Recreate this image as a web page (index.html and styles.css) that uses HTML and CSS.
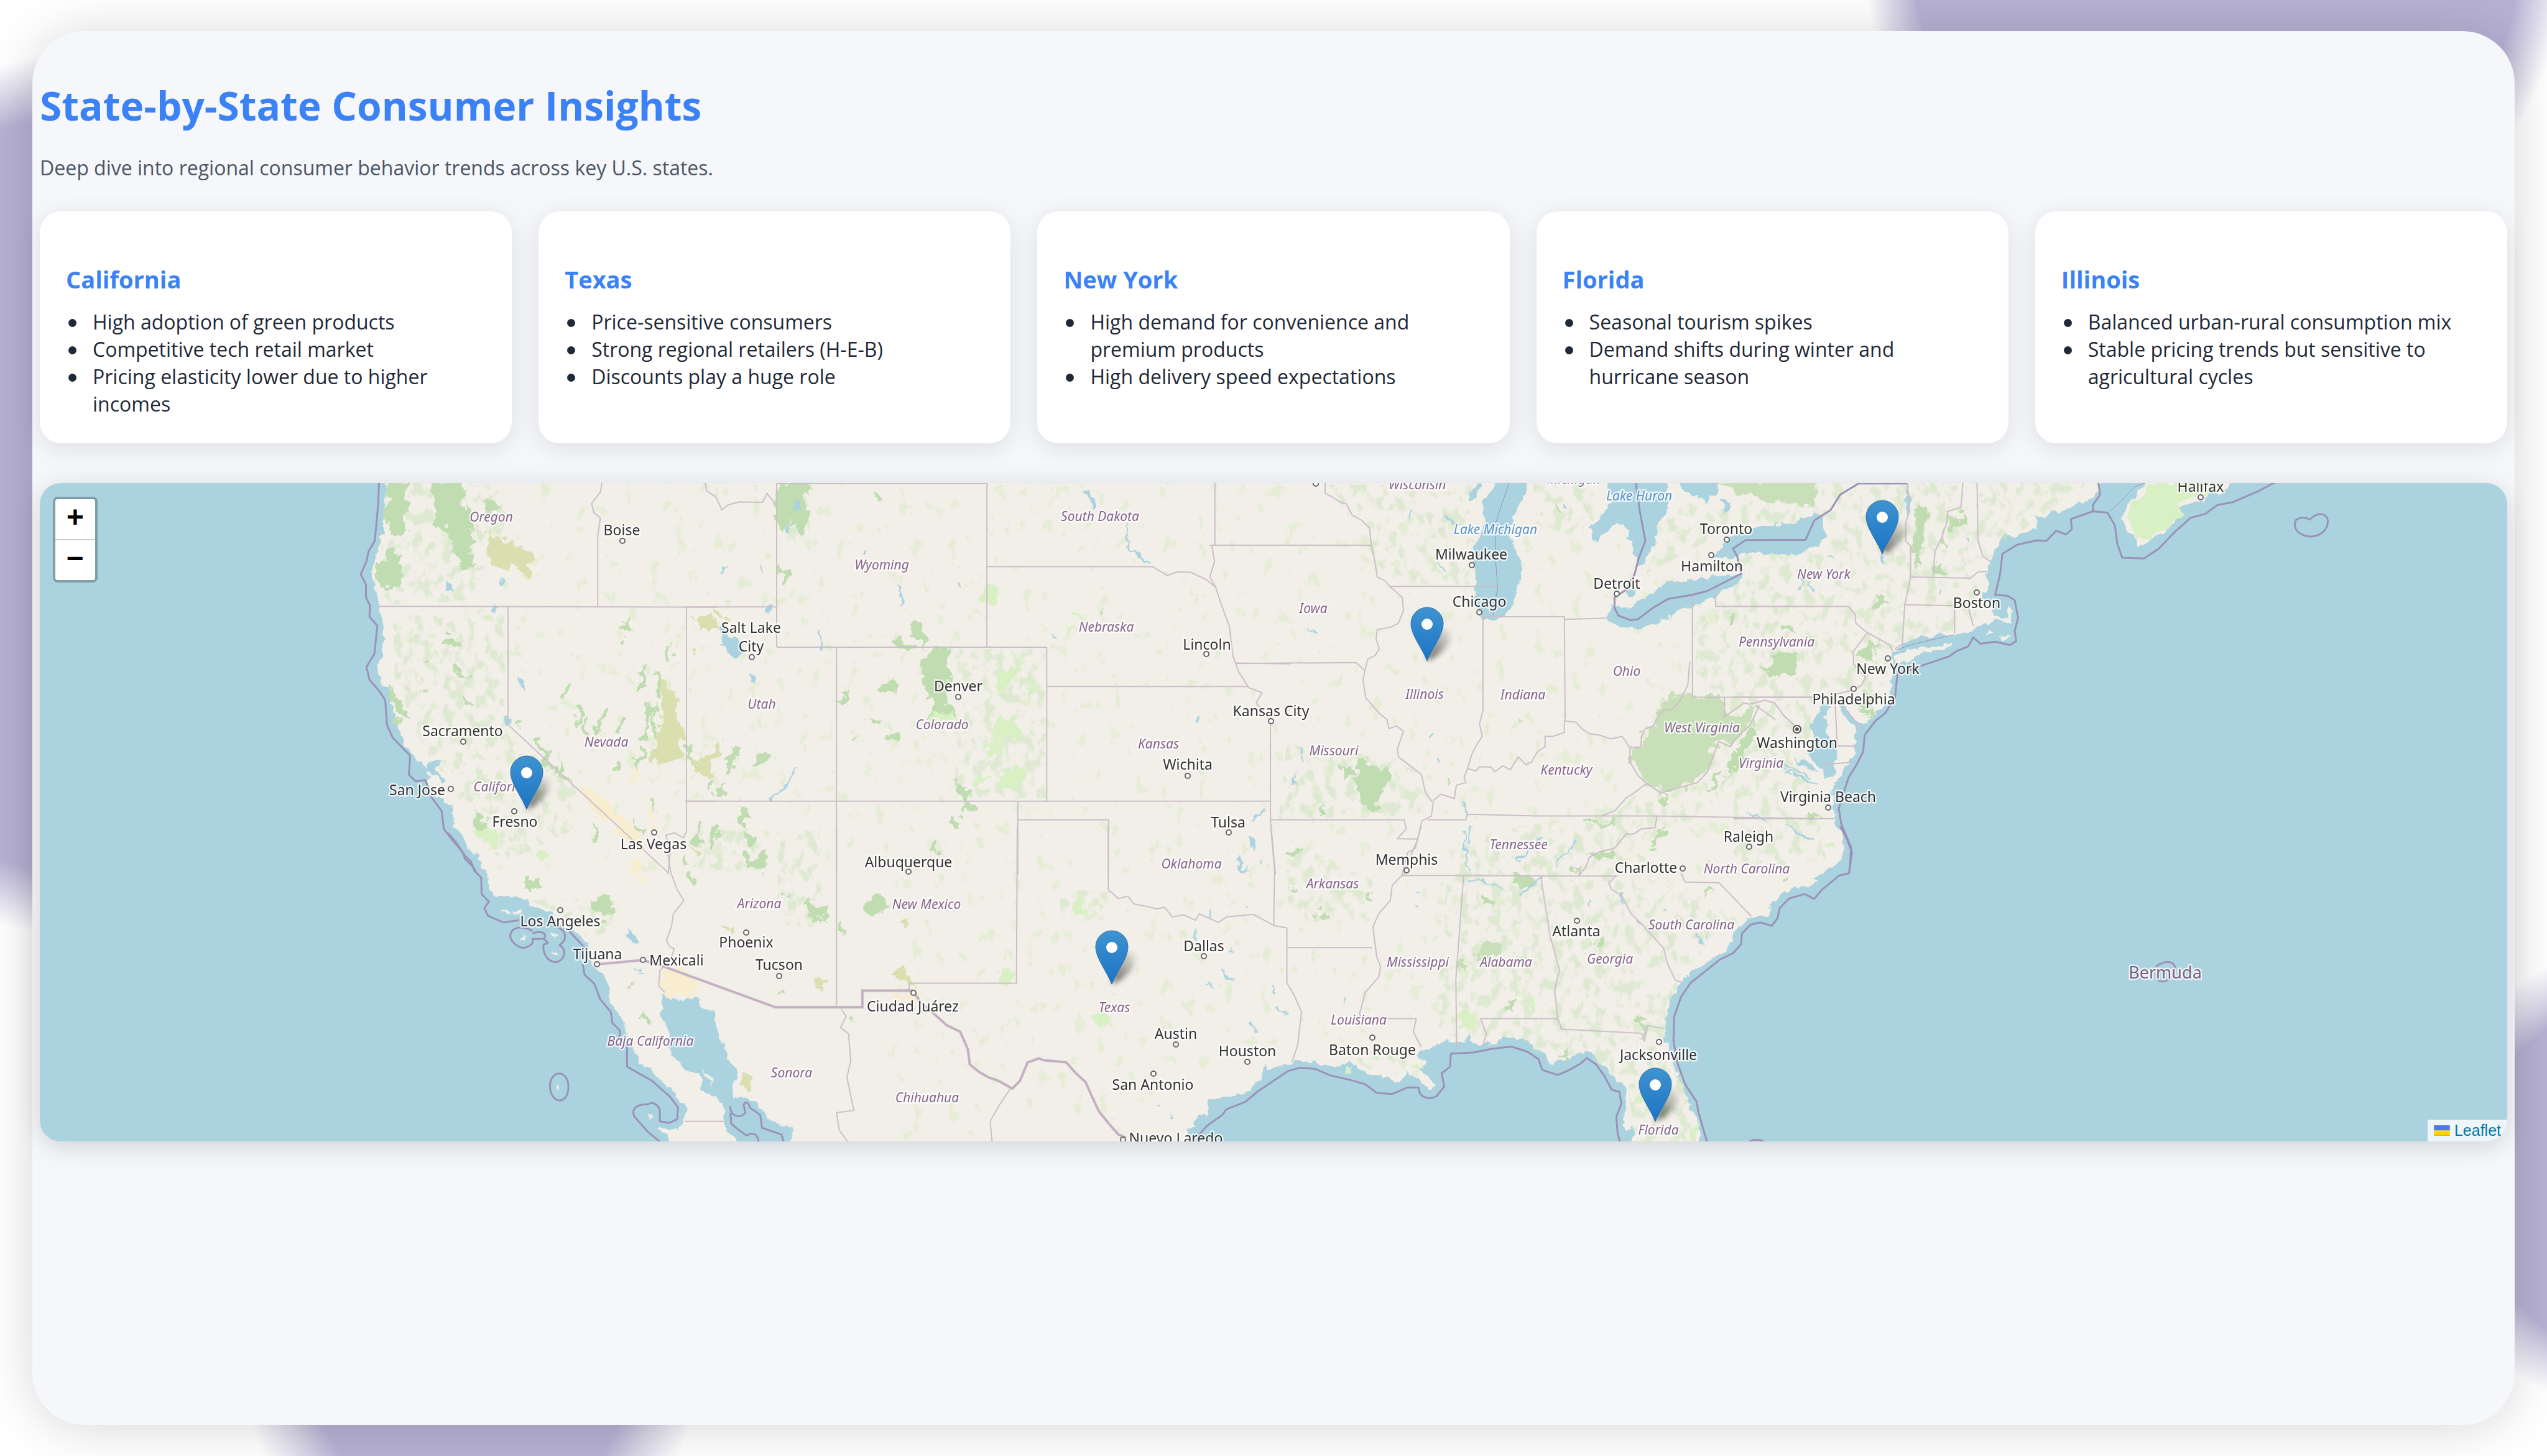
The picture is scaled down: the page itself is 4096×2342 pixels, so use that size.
FILE: index.html
```html
<!DOCTYPE html>
<html lang="en">
<head>
<meta charset="utf-8">
<meta name="viewport" content="width=device-width, initial-scale=1">
<title>State-by-State Consumer Insights</title>
<link rel="stylesheet" href="styles.css">
</head>
<body>
<main class="panel">
  <h1 class="title">State-by-State Consumer Insights</h1>
  <p class="subtitle">Deep dive into regional consumer behavior trends across key U.S. states.</p>

  <section class="cards">
    <article class="card">
      <h3>California</h3>
      <ul>
        <li>High adoption of green products</li>
        <li>Competitive tech retail market</li>
        <li>Pricing elasticity lower due to higher incomes</li>
      </ul>
    </article>
    <article class="card">
      <h3>Texas</h3>
      <ul>
        <li>Price-sensitive consumers</li>
        <li>Strong regional retailers (H-E-B)</li>
        <li>Discounts play a huge role</li>
      </ul>
    </article>
    <article class="card">
      <h3>New York</h3>
      <ul>
        <li>High demand for convenience and premium products</li>
        <li>High delivery speed expectations</li>
      </ul>
    </article>
    <article class="card">
      <h3>Florida</h3>
      <ul>
        <li>Seasonal tourism spikes</li>
        <li>Demand shifts during winter and hurricane season</li>
      </ul>
    </article>
    <article class="card">
      <h3>Illinois</h3>
      <ul>
        <li>Balanced urban-rural consumption mix</li>
        <li>Stable pricing trends but sensitive to agricultural cycles</li>
      </ul>
    </article>
  </section>

  <section class="map">
    <svg class="map-canvas" viewBox="0 0 3968 1059" preserveAspectRatio="xMidYMid slice" role="img" aria-label="Map of the United States">
      <defs>
        <filter id="ragged" filterUnits="userSpaceOnUse" x="0" y="0" width="3970" height="1059" color-interpolation-filters="sRGB">
          <feTurbulence type="fractalNoise" baseFrequency="0.06" numOctaves="3" seed="4" result="n"/>
          <feDisplacementMap in="SourceGraphic" in2="n" scale="16" xChannelSelector="R" yChannelSelector="G"/>
        </filter>
        <filter id="rough" filterUnits="userSpaceOnUse" x="0" y="0" width="3970" height="1059" color-interpolation-filters="sRGB">
          <feTurbulence type="fractalNoise" baseFrequency="0.05" numOctaves="4" seed="9" result="n"/>
          <feDisplacementMap in="SourceGraphic" in2="n" scale="34" xChannelSelector="R" yChannelSelector="G"/>
        </filter>
        <filter id="speckle" filterUnits="userSpaceOnUse" x="0" y="0" width="3970" height="1059" color-interpolation-filters="sRGB">
          <feTurbulence type="fractalNoise" baseFrequency="0.06 0.045" numOctaves="4" seed="21"/>
          <feColorMatrix values="0 0 0 0 0  0 0 0 0 0  0 0 0 0 0  7 0 0 0 -3.6" result="m"/>
          <feComposite in="SourceGraphic" in2="m" operator="in"/>
        </filter>
        <filter id="speckle-sparse" filterUnits="userSpaceOnUse" x="0" y="0" width="3970" height="1059" color-interpolation-filters="sRGB">
          <feTurbulence type="fractalNoise" baseFrequency="0.05 0.035" numOctaves="4" seed="5"/>
          <feColorMatrix values="0 0 0 0 0  0 0 0 0 0  0 0 0 0 0  0 10 0 0 -6.5" result="m"/>
          <feComposite in="SourceGraphic" in2="m" operator="in"/>
        </filter>
        <filter id="soft" x="-50%" y="-50%" width="200%" height="200%"><feGaussianBlur stdDeviation="4"/></filter>
        <linearGradient id="pin-fill" x1="0" y1="0" x2="0" y2="1"><stop offset="0" stop-color="#3f93d0"/><stop offset="1" stop-color="#1c74c4"/></linearGradient>
        <linearGradient id="pin-shade" x1="0" y1="1" x2="1" y2="0"><stop offset="0" stop-color="#000" stop-opacity=".6"/><stop offset="1" stop-color="#000" stop-opacity="0"/></linearGradient>
        <g id="pin">
          <path d="M0 0C4-16 10-40 22-50C34-56 42-46 38-36C34-22 18-6 0 0Z" fill="url(#pin-shade)" filter="url(#soft)"/>
          <path d="M0 0C-9-22-26-42-26-60A26 26 0 0 1 26-60C26-42 9-22 0 0Z" fill="url(#pin-fill)" stroke="#2b6fa8" stroke-width="1"/>
          <circle cy="-59" r="9" fill="#fff"/>
        </g>
        <circle id="dot" r="4" fill="#fff" stroke="#666" stroke-width="2"/>
      </defs>

      <g class="land" filter="url(#ragged)">
        <g class="t4"><path d="M808 20L803 180L800 250L785 340L778 400L782 460L792 530L805 590L802 660L800 720L788 780L800 815L820 860L828 920L832 985L845 1030L860 1075L880 1120L892 1135L918 1155L905 1170L915 1190L905 1215L925 1270L945 1290L962 1300L960 1350L970 1385L985 1420L1000 1455L1018 1490L1030 1520L1045 1568L1700 1568L1700 20Z"/></g>
        <g class="t8"><path d="M335-10L360 40L375 90L410 160L415 195L430 205L432 290L445 320L500 320L530 335L540 360L570 385L600 395L600 430L640 470L670 500L690 530L690 580L705 640L720 680L745 740L745 800L765 860L790 910L790 960L808 1020L815 1080L860 1120L890 1170L920 1230L945 1290L940 1350L915 1385L870 1385L910 1460L1084 1460L1055 1400L1042 1350L1040 1280L1020 1250L985 1190L975 1140L920 1080L900 1020L890 900L878 860L882 780L890 765L935 800L960 785L975 800L980 830L1018 845L1020 920L1040 990L1050 1060L1075 1120L1082 1150L1062 1180L1065 1235L1090 1230L1105 1260L1130 1260L1160 1350L1215 1375L1220 1470L1700 1470L1700-10Z"/>
          <path d="M465 390h18v14h-18zM488 384h24v12h-24zM598 480l14 20-12 10zM515 508h10v14h-10zM598 560l12 26-8 4zM612 1175l8 30-6 6zM850 1310l7 30-10 6zM985 1115l14 25 16 48-18-22z"/></g>
        <g class="t5"><path d="M-200 20H1700V1600H-200Z"/></g>
        <g class="t9"><path d="M-100-10V1470H800L775 1390L800 1370L800 1330L830 1310L835 1250L870 1240L920 1230L950 1190L970 1150L980 1080L990 1110L1050 1080L1100 1078L1150 1100L1180 1100L1200 1075L1230 1120L1270 1140L1300 1150L1335 1175L1345 1130L1370 1130L1385 1165L1400 1210L1418 1175L1400 1150L1380 1110L1400 1080L1370 1050L1400 1010L1440 985L1500 985L1510 930L1515 990L1568 990L1620 960V-10Z"/></g>
        <g class="t10"><path d="M-60-10V960L20 1005L60 985L140 985L148 930L160 985L190 1000L205 985L230 968L290 970L310 1000L345 1030L365 1090L400 1075L420 1060L435 1035L470 1040L490 1085L520 1130L530 1165L552 1180L560 1230L555 1290L550 1360L560 1400L575 1370L580 1410L565 1470L752 1470L745 1380L735 1310L715 1260L705 1200L690 1130L670 1040L658 960L660 890L670 800L690 750L710 700L735 650L775 615L805 575L835 535L840 480L870 425L890 410L925 405L935 350L960 310L990 285L1040 265L1055 240L1010 230L1030 190L1000 150L1060 160L1080 130L1030 110L1005 80L1060 90L1100 110L1085 60L1060 20L1040-10Z"/></g>
        <g class="t6"><path d="M-100 20H1500V1600H-100Z"/></g>
        <g class="t7"><path d="M-60 20L752 20L745 95L715 120L690 140L660 165L650 150L635 185L620 170L620 220L600 230L580 250L550 245L545 290L530 310L525 350L515 400L525 440L510 470L510 500L530 510L530 560L562 572L560 520L575 540L568 580L530 578L525 600L495 600L480 625L450 630L400 640L365 655L340 680L326 700L322 750L328 790L318 850L320 890L290 940L265 990L240 950L225 905L215 920L250 1010L250 1080L240 1130L225 1160L212 1210L200 1240L204 1300L208 1370L225 1420L225 1480L210 1530L160 1580H-60Z"/>
          <path d="M330 712L370 690L430 668L450 670L430 690L380 715L345 740L328 735ZM515 630l12-20 10 14zM545 640l16-4 4 8-16 4z"/>
          <path d="M855 20L815 110L798 165L800 215L820 250L832 295L850 265L880 240L905 190L920 130L950 110L960 125L965 100L1000 75L1035 20Z"/></g>
      </g>

      <g class="wash" filter="url(#speckle)">
        <g class="t4"><path d="M812 30L1070 30L1090 180L1000 500L805 520L800 300ZM825 560L1080 560L1085 980L1250 1250L1230 1400L1060 1540L1010 1400L970 1250L890 1060L830 800Z"/></g>
        <g class="t6"><path d="M310 50L680 50L690 440L470 440ZM840 50L1010 50L1000 180L960 260L840 200ZM1200 130L1568 80L1568 200L1330 240L1130 400ZM1260 500L1568 520L1568 860L1260 860Z"/>
          <path d="M1180 860L1340 860L1568 890L1480 1120L1300 1330L950 1560L700 1560L720 1400L1060 1320L1130 1220L1090 1100ZM200 1060L540 1130L560 1340L180 1350Z"/></g>
        <g class="t7"><path d="M0 150L200 40L730 40L610 200L500 380L500 590L340 670L285 920L200 900L150 1080L180 1400L190 1520L0 1540Z"/></g>
        <g class="t10"><path d="M100 80L560 80L680 250L850 430L700 660L670 860L740 1450L580 1450L560 1160L450 1030L370 1070L290 960L60 960ZM180 890L600 950L650 1100L540 1160L440 1030L360 1070L240 960Z"/></g>
        <g class="t5"><path d="M700 690L935 690L935 1270L700 1270ZM235 50L330 50L320 270L235 270Z"/></g>
        <g class="t9"><path d="M450 290L580 300L560 430L450 420ZM1200 1060L1370 1040L1380 1150L1280 1140ZM1040 60L1260 250L1240 430L1040 440Z"/></g>
        <g class="t8"><path d="M540 340L760 320L750 470L690 520L620 400ZM1180 20L1300 20L1300 460L1180 460ZM960 20h180v180h-160z"/></g>
      </g>
      <g class="wash faint" filter="url(#speckle-sparse)">
        <g class="t4"><path d="M900 30H1568V1568H1060L850 700Z"/></g>
        <g class="t5"><path d="M0 30H1568V1568H0Z"/></g>
        <g class="t6"><path d="M130 200H1400V1568H130Z"/></g>
        <g class="t9"><path d="M0 0H1700V960L900 1000L600 1400L0 1440Z"/></g>
      </g>

      <g filter="url(#rough)">
        <g class="forest t4"><path d="M812 30L860 30L850 190L865 240L830 255L805 190ZM915 30L985 30L990 150L1010 240L1005 390L980 390L965 300L950 230L915 200ZM1030 110L1070 130L1070 165L1040 165ZM815 310L848 320L848 440L790 440L788 380ZM815 830L850 900L855 970L835 960L820 890ZM965 770l10 35 22-8-8-16zM982 860l24 50-20 0zM950 620l20 40 20-10-12 30-40-15zM1005 1300L1050 1360L1065 1440L1020 1400ZM1370 1360l30 30-8 20zM1200 1080l15 60 20 120-20-60z"/>
          <path class="lines" d="M1225 830L1212 880M1245 920L1250 990M1270 940L1262 1020M1310 930L1290 1030M1355 950L1340 1010M1410 900L1400 1040M1420 900L1425 1040M1400 1080L1380 1160M1390 850L1400 740M1460 680V720M1345 650V670M1365 580V620M1330 1130L1338 1170M1440 790L1430 880M1508 1070L1515 1170M1120 980V1010M1180 1110L1200 1170M1425 1290V1340M1290 1390V1420M905 740l6 10M895 830v20M1150 1050l30 60"/></g>
        <g class="olive t4"><path d="M1040 215L1070 270L1123 285L1145 330L1145 400L1110 400L1110 370L1055 370L1050 310ZM1440 790L1470 870L1490 1000L1480 1140L1410 1130L1440 980ZM1520 570L1560 560L1565 610L1530 615ZM1510 1130L1560 1120L1540 1200L1505 1180Z"/></g>
        <g class="sand t4"><path d="M1255 1210L1330 1300L1370 1380L1390 1480L1340 1400L1270 1290ZM1370 1150l14 0-6 80-12 0zM1420 1280l10 90-14 0z"/></g>
        <g class="forest t5"><path d="M238 45L320 45L318 130L310 250L270 190L250 240L238 220ZM585 600L610 595L625 680L600 660ZM530 630L560 645L590 690L565 710L530 660ZM630 690L680 690L690 800L670 860L705 960L630 960L640 880L605 800ZM515 830L540 810L545 860L515 845ZM395 870L425 850L420 895L395 895ZM465 975L510 955L500 995ZM520 1010L550 1020L545 1055L520 1050ZM425 1040l20 5-4 14-14 0zM700 1200L735 1230L735 1290L705 1280ZM725 1290l20 0 0 40-20 0zM690 1330l20 10-4 40-14 0zM140 1290L160 1330L165 1400L140 1370ZM145 1410L185 1440L180 1460L150 1440ZM150 1495L205 1490L210 1545L165 1545ZM115 1080l20 4-15 90-12 0zM195 1080l16 30-20 35-14-10z"/>
          <path class="lines" d="M250 350L258 450M35 1370V1450M70 1370V1470M10 1060L20 1150M645 1450V1470M100 1220v50M1070 545v8M500 75v40M70 1190v60"/></g>
        <g class="meadow t5"><path d="M770 450L805 450L812 510L780 510L765 480ZM990 600h24v16h-24zM1015 570h22v14h-22zM800 790L850 760L880 710L860 800L820 850ZM870 820L920 840L880 880ZM800 960L840 960L880 1020L860 1050L800 1050ZM775 1060L830 1050L800 1100ZM850 1150L880 1150L870 1230L810 1240ZM745 1170L790 1190L750 1225ZM640 930h50v40h-50z"/></g>
        <g class="olive t5"><path d="M28 570L70 560L75 610L30 610ZM80 540L105 560L90 575ZM80 1060L95 1070L70 1150L20 1195L15 1160L50 1130ZM10 690l20 10-20 25zM15 1440l30 60-14 0z"/></g>
        <g class="forest t6"><path class="hills" d="M1175 870L1330 870L1335 955L1420 910L1400 990L1350 1070L1320 1050L1290 1170L1240 1220L1170 1250L1130 1210L1090 1130L1090 1075L1120 1070L1130 1000L1160 960ZM1330 30H1568V140L1440 100Z"/>
          <path d="M340 1140L370 1160L350 1200ZM390 1130L430 1130L460 1180L460 1220L440 1260L435 1320L400 1310L390 1240L370 1200ZM290 1290l14 40-18 0zM195 1470h32v14h-32zM985 1490L1050 1470L1045 1500L985 1500ZM1165 1400l25-8-20 60-12-10zM1350 565l16 0 0 30-14 5zM1490 600l26 20-24 10zM1500 690L1540 720L1510 800L1450 760ZM1410 1010L1380 1130L1330 1200L1350 1120ZM795 960l16 0-6 20zM615 1200l18 0-6 20z"/>
          <path class="lines" d="M970 1370L1040 1365M1180 1260V1300M1320 1180L1290 1230M905 130v20M1160 1460L1140 1490"/></g>
        <g class="forest t7"><path d="M375 130L400 150L390 240L385 370L370 380L370 200ZM450 170h28v50h-28zM425 220L440 260L430 300ZM410 360h16v44h-16zM290 480L310 480L308 525L288 520ZM100 600L125 605L128 625L105 625ZM85 700L130 720L130 780L90 810L60 770ZM265 680L300 660L280 740L250 720ZM270 860L300 850L265 960ZM155 1310h14v40h-14zM5 1080L40 1000L50 1020L20 1100Z"/>
          <path class="hills" d="M-60 45H170L150 110L60 110Z"/></g>
        <g class="meadow t7"><path d="M870 40L1000 40L960 90L920 120L900 200L850 260L825 270L810 220L805 160Z"/></g>
        <g class="forest t8"><path d="M525 240L565 240L570 290L525 290ZM700 330L750 340L750 390L715 380ZM730 430h16v30h-16zM1095 130L1150 140L1145 190L1100 190ZM1085 20L1120 60L1110 90L1090 60ZM1255 340L1295 370L1300 440L1270 430ZM1410 340L1470 320L1470 370L1430 410L1408 400ZM1345 450l14 10-6 24-10 0zM828 860l12 10 4 30-16-10zM795 690l12 10-4 20-10-5zM1365 860h14v24h-14z"/>
          <path class="lines" d="M960 200V260M1015 10V90M710 10V60M1205 310V330M1190 760V780M935 130L940 170M1030 10V60"/></g>
        <g class="meadow t8"><path d="M560 100L590 110L580 150L550 140ZM390 0L440 0L465 70L430 80Z"/></g>
        <g class="olive t8"><path d="M960 80L985 130L975 150ZM1090 1140L1115 1145L1115 1215L1095 1210ZM1500 650L1530 700L1550 740L1520 720L1475 680ZM1495 420h16v40h-16zM1050 450h16v26h-16zM1285 690h12v60h-12z"/></g>
        <g class="sand t8"><path d="M880 655L925 660L970 720L945 795L890 760L875 700ZM785 130L830 150L830 240L790 230ZM1470 762h60v30h-60zM775 0l30 0 40 110-20 20z"/></g>
        <g class="forest t9"><path d="M1030 95L1065 90L1065 125L1030 125ZM1120 370L1145 395L1140 425L1120 420ZM1045 275h24v24h-24zM1250 290l14 30-10 5zM1480 640h26v26h-26zM115 60h14v60h-14zM935 370h12v20h-12zM1545 320h20v30h-20z"/></g>
        <g class="meadow t9"><path d="M485 320L500 320L500 370L530 400L550 410L530 350L545 380L555 415L520 410L485 370ZM290 655L325 655L325 715L290 710ZM535 860L585 860L580 900L540 900ZM1480 880L1515 860L1515 920L1480 930ZM1360 1080l30 0-10 30zM1195 1100h20v20h-20z"/></g>
        <g class="forest t10"><path d="M275 230L320 232L315 275L290 300L270 270ZM185 325L210 325L210 350L185 350ZM410 190L435 190L420 245ZM465 120L530 95L525 140L480 150ZM640 20L665 30L635 80L615 85ZM475 520L500 520L495 560L475 550ZM582 878h24v34h-24zM600 910h10v50h-10zM250 810h16v30h-16zM385 1045h16v18h-16zM755 290h20v16h-20zM895 150l16 12-10 10zM965 230h16v20h-16z"/>
          <path class="hills" d="M205 530L230 540L225 590L160 600L165 560ZM120 635L145 660L120 665Z"/></g>
        <g class="meadow t10"><path d="M120 860L160 850L155 930L120 915ZM310 800h18v40h-18zM720 1400L745 1340L745 1420ZM590 1200L600 1280L575 1240ZM1085 70h14v40h-14z"/></g>
      </g>

      <g class="water" filter="url(#ragged)">
        <g class="t6">
          <path d="M745 10L825 20L822 80L800 130L790 180L775 240L790 290L808 350L808 420L795 490L775 550L745 580L710 578L700 550L685 510L690 430L685 370L690 290L705 240L715 180L708 120L735 60Z"/>
          <path d="M705 40L690 100L670 120L675 80L690 45Z"/>
          <path d="M1028 10L1040 110L1015 180L988 215L990 260L1010 265L1040 210L1075 200L1085 250L1105 340L1110 365L1125 350L1160 280L1160 210L1185 160L1190 100L1180 10Z"/>
          <path d="M1205 10L1225 70L1260 90L1290 125L1295 100L1320 80L1310 10ZM1330 110l20 10 2 30-18 14zM1072 462l30-6 4 22-26 4z"/>
          <path d="M1040 520L1085 530L1130 490L1190 430L1240 425L1385 392L1370 430L1310 490L1220 540L1160 590L1100 615L1060 600L1030 570Z"/>
          <path d="M1310 330L1330 285L1370 240L1440 210L1500 205L1560 170L1592 178L1592 260L1568 300L1520 325L1470 318L1400 315L1350 335Z"/>
        </g>
        <g class="t7"><path d="M190 900L165 950L160 1000L170 1060L150 1100L172 1140L185 1150L188 1200L205 1190L212 1140L205 1130L212 1070L190 1000L185 950L200 915ZM158 1140l-30-20 10 25 30 30zM355 50l6 100-5 20-6-60z"/></g>
        <g class="t5"><path d="M92 585L105 630L135 650L152 700L135 732L110 710L95 650ZM170 780l16 20-8 30-10-10zM1020 80l30-10 6 30 8 30-14 4-8-40zM275 118l22 0 0 34-12 0zM208 510h12v38h-12zM262 205l8 30-8 4zM945 632l20 14-6 4z"/></g>
        <g class="t4"><path d="M1055 515l12 5-4 35-8-5zM1112 800l10 20 6 34-10-6-6-30zM1082 955l10 5-2 32-8-6zM918 1120l18 0-16 40 24 50-8 0-20-30-6-40zM950 430l12 30 0 20-12-20zM1070 415h8v24h-8z"/></g>
        <g class="t8"><path d="M788 472l18 15 18 40-6 12-20-15zM810 640l6 18-6 2zM815 655h14v10h-14zM815 680h14v8h-14z"/></g>
      </g>
      <g class="streams" filter="url(#ragged)">
        <g class="t5"><path d="M1145 200L1145 270L1160 310L1210 360M555 445l6 80M350 620l2 70M460 305v24M105 365l-8 34M285 1155l-20 60-50 66M1330 950v20M1500 1320l-30 40M1435 1500l10 60M1465 1420l10 60M1490 1510v20M708 435v20M190 365l6 26"/></g>
        <g class="t6"><path d="M515 190l15-40M575 1020l-10 20M597 1110v20M655 1280l16 60M240 1080v50M220 1180v40M260 610l18 16M920 130l10 20M595 350l10 40M610 180l40 30M1500 1380l40 40 25 10M660 1400l10 160M860 1430l-60 80"/></g>
        <g class="t9"><path d="M910 150l10 60 20-20M1010 820l25 45M870 650l10 40M940 890l16 45M800 480v40M890 560l10 20M880 690l20 15M1185 790v16M1375 310l10-12M1375 360v12M1000 730l4 30M830 720l20 15M840 380v40M700 1280h8M735 1320l6 22"/></g>
        <g class="t10"><path d="M150 240l60 20 30 35M280 320l40-60 20-30M380 190l10-60 40-60M150 0v80M545 300l10 60M580 440l20 8M660 375v8M765 490v30M740 490l16 50M460 330v30"/></g>
        <g class="t7"><path d="M30 1330l40 26M110 1160l60 60M100 1140l60 50M138 415v50M150 430l14 40M420 450v30M305 320v30M480 255v20M192 330l16 6"/></g>
      </g>

      <g class="borders">
        <g class="t4"><path d="M792 524L1568 528M1089 528V985L1455 1560M1305 30L1300 80L1280 125L1285 160L1300 180L1294 250V524M1497 528V1400L1490 1425L1470 1405L1450 1415L1460 1480L1455 1568M1497 1282H1568"/></g>
        <g class="t5"><path d="M50 30L55 75L80 100L95 150L110 130L140 118L200 120L212 85L232 125M237 47V683M237 47H782M782 30V683M0 527H237M237 683H937M782 370H1212L1250 405L1275 390L1310 392L1350 420L1375 450L1390 520L1410 600L1420 720L1435 780L1460 840L1495 860L1480 900L1517 970V1355L1530 1568M1373 30V287M1365 287H1568M1365 287L1372 350L1360 410L1375 450M1428 745L1568 748M937 683V1282M937 836H1460M0 1282H1515M392 683V1568M862 1282V1568M862 1355H1097V1568"/></g>
        <g class="t6"><path d="M300 45V85L320 100L340 120L355 125L370 170L395 190L415 220L420 290L430 360L433 390L435 410L455 425L467 447L485 470L500 490L503 540L490 590L470 605L435 615L432 650L440 690L430 715L410 730L403 775L398 810L405 880L440 940L460 965L465 1000L485 990L503 1010L487 1080L490 1110L525 1150L550 1180L560 1250L580 1290L575 1340L550 1360L540 1430L520 1500L505 1568M0 287H418M467 447H747M70 747L380 743L403 775M709 565V930L700 980L707 1030L690 1070L680 1100L670 1150L660 1190L665 1210L640 1220L635 1272L600 1255L580 1280M709 565H920L922 970M920 575L1030 570M670 1155L690 1165L700 1148L730 1150L740 1168L760 1145L780 1160L800 1110L820 1140L835 1130L850 1090L870 1070L870 1030L890 1030L920 1015V970L950 975L965 1000L985 1020L1010 1025L1040 1040L1070 1030L1090 1075L1118 1072L1120 1030L1130 1000L1150 990L1160 960L1175 930L1200 925L1220 890L1240 830L1245 740M1252 480V878H1568M1312 455V525H1568M1335 880V955L1385 900L1400 905L1440 890L1465 900L1490 950L1525 1000M1425 910L1410 960L1400 990L1370 1030L1350 1070L1320 1050L1305 1110L1290 1170L1265 1210L1240 1220L1170 1250L1130 1210L1110 1180L1090 1130V1075M1130 1215L1110 1240L1080 1270L1050 1320L1015 1340M565 1355H665L668 1333L850 1340H1160L1568 1350M158 1355H505L510 1390L487 1428L537 1430M1160 1342L1155 1385L1120 1390L1100 1410L1080 1410L1050 1465L1010 1480L985 1500L975 1540L960 1568"/></g>
        <g class="t7"><path d="M469 45L465 140L438 155L436 200L425 260L412 310L408 410M498 45L500 270L510 330L525 350M355 45L360 150L352 200V270L362 290V410L350 520L345 670L330 690M362 410L485 415L500 390L520 390M348 518L452 522V630M480 525L490 600M0 525H235L248 555L250 590L272 625L320 675L325 700M272 630L245 700V750L270 800L262 830L245 850L210 865M207 880L212 1068H252M0 878H200L215 895L262 1000M178 1140L240 1132M0 1350H205M45 910L85 965"/></g>
        <g class="t8"><path d="M895 120L903 210L920 290L937 340L910 400L905 460L892 520L900 550L912 560L905 600L875 660L872 730L888 760M1333 0V828M1345 835L1358 870L1343 920L1365 950L1365 970L1370 1070L1360 1150L1378 1300L1333 1310L1340 1390L1365 1450M940 1350H1042"/></g>
        <g class="t9"><path d="M338 0L336 718H58V750M320 1200L290 1280L268 1350L273 1450M574 0V290L600 330L625 320L640 355L670 365L700 378L720 370L740 415L770 405L800 430L810 400L860 440L880 415L950 403L1005 455L1037 465V718L1055 770L1075 850L1065 1000L1050 1080M1003 455L1005 200L995 0M1037 555H1258M1385 0L1375 60L1370 100L1350 120L1335 225L1310 270L1305 340L1275 400L1260 460L1270 600L1280 640L1275 690L1240 760L1225 860L1235 880H1372L1365 940L1385 1010M1335 225H1568M1495 225L1475 700L1477 1010"/></g>
        <g class="t10"><path d="M135 225L435 228H535M336 230L360 500L385 660L380 690L372 750L380 880H180L195 950L185 1010M380 880L390 928L598 947L605 985L612 912L655 925M530 228L512 260L520 290L545 315L570 400L605 460L630 510L655 560L665 630L685 705L705 715M700 215L710 255L798 258L882 412M435 228L440 185"/></g>
      </g>
      <g class="frontier">
        <g class="t8"><path d="M710 632L832 612L890 645L1175 828H1400V752H1530"/></g>
        <g class="t9"><path d="M68 755L90 810L130 870L155 910L190 940L210 1020L215 1090L240 1125L265 1150L290 1165L325 1200L345 1165L365 1080L395 1062L405 1070L465 1080L490 1130L515 1170L530 1230L550 1305L580 1370L600 1410L620 1425"/></g>
      </g>
      <g class="sea-line">
        <g class="t4"><path d="M794 30L792 120L788 200L784 270L770 310L765 350L752 400L764 440V490L773 520L772 565L790 600L785 680L783 710L765 760L772 810L795 855L808 890L812 985L825 1035L845 1070L865 1105L862 1180L878 1205L900 1200L915 1270L937 1320L942 1390L960 1430L985 1480L990 1505L1010 1540L1016 1560"/></g>
        <g class="t8"><path d="M326 30L345 70L370 135L385 160L395 205L412 235L413 310L432 345L420 375L430 410L450 425L470 440L510 430M545 480C525 455 490 455 487 500C488 530 510 560 525 555C545 545 548 530 545 515L575 515C585 480 560 480 545 490M600 455C630 470 640 510 615 545C635 560 630 615 605 622C580 620 570 570 574 540L585 535L575 515M640 480L672 540L690 580M675 630L680 680L705 720L720 790L748 850L752 900L772 935L770 970L790 1010V1100L855 1165L900 1235L922 1285L920 1340L900 1357L875 1350L875 1300C870 1265 850 1260 845 1272C810 1270 800 1300 810 1330L825 1360L845 1400L880 1450M590 1193C590 1110 638 1110 638 1193C638 1275 594 1275 590 1193ZM1058 1280C1055 1320 1080 1345 1097 1310L1092 1275C1097 1255 1103 1260 1110 1290L1135 1320L1140 1380L1190 1410L1197 1450M1058 1310L1060 1360L1080 1390L1100 1415C1115 1400 1128 1400 1132 1450"/></g>
        <g class="t9"><path d="M805 1420L830 1370L870 1320L880 1295L930 1260L960 1215L1010 1155L1040 1120L1070 1105L1110 1110L1150 1140L1200 1160L1240 1180L1270 1220L1310 1225L1350 1195L1378 1195C1380 1250 1410 1250 1425 1235L1445 1190L1438 1130L1460 1100L1462 1040L1520 1035L1568 1018"/></g>
        <g class="t10"><path d="M209 1018L260 1008L300 1030L330 1065L340 1115L380 1138L410 1115L440 1085L455 1060L480 1090L500 1140L520 1205L540 1215L545 1270L532 1330L535 1400L542 1450M768 1450L745 1310L740 1260L710 1180L690 1080L680 980L682 870L700 780L725 715L765 660L800 610L835 580L855 540L858 490L880 450L905 440L935 455L950 420L955 375L980 330L1020 310L1045 332L1065 290L1110 225L1135 215L1143 120L1130 60L1112 0M875 1450C880 1430 910 1430 918 1450"/></g>
        <g class="t6"><path d="M1104 30L1115 150L1130 270L1112 340L1102 400L1080 460L1050 490V530L1060 560L1090 578L1110 575L1150 530L1190 495L1250 480L1290 465L1378 398L1368 330L1357 300L1390 267L1545 266L1568 190L1610 150L1635 90L1690 40"/><path class="thin" d="M780 30L755 140L742 200V350L747 450L735 560"/></g>
        <g class="t7"><path d="M255 47H355M745 30L750 90L735 130V155L690 185L692 225L680 245L660 230L640 270L620 268L580 285L550 320L545 400L535 480L560 483L575 500L582 570L575 620L578 660L565 675L535 662L505 670L490 645L480 680L455 700L440 720L385 755L335 790L330 880L310 940L290 970L268 1025L265 1090L250 1145L235 1190L225 1250L215 1310L220 1370L240 1460L238 1540M735 155L765 160L780 210L785 280L795 335L840 338L870 300L900 240L935 180L965 165L990 130L1020 120L1070 80L1110 40M1180 187C1190 160 1215 155 1216 195C1215 235 1195 255 1178 253C1150 245 1145 215 1150 190C1160 175 1170 178 1180 187Z"/><path class="thin" d="M860 30L820 60L790 120L770 155M330 695L370 670L450 635"/></g>
        <g class="t11"><path d="M318 118C330 108 350 100 370 106C380 112 382 122 375 135C365 160 340 168 322 156"/></g>
      </g>

      <g class="dots">
        <use href="#dot" x="937" y="93"/><use href="#dot" x="681" y="416"/><use href="#dot" x="661" y="492"/><use href="#dot" x="763" y="528"/><use href="#dot" x="988" y="562"/><use href="#dot" x="1145" y="280"/><use href="#dot" x="1477" y="344"/><use href="#dot" x="1876" y="275"/><use href="#dot" x="1980" y="383"/><use href="#dot" x="1846" y="471"/><use href="#dot" x="1912" y="562"/><use href="#dot" x="1397" y="625"/><use href="#dot" x="2303" y="132"/><use href="#dot" x="2315" y="208"/><use href="#dot" x="2536" y="178"/><use href="#dot" x="2713" y="91"/><use href="#dot" x="2688" y="116"/><use href="#dot" x="2198" y="623"/><use href="#dot" x="2642" y="620"/><use href="#dot" x="2749" y="585"/><use href="#dot" x="3475" y="23"/><use href="#dot" x="3115" y="176"/><use href="#dot" x="2972" y="282"/><use href="#dot" x="2917" y="331"/><use href="#dot" x="2876" y="522"/><use href="#dot" x="837" y="687"/><use href="#dot" x="896" y="774"/><use href="#dot" x="970" y="767"/><use href="#dot" x="1136" y="723"/><use href="#dot" x="1189" y="793"/><use href="#dot" x="1405" y="820"/><use href="#dot" x="1872" y="761"/><use href="#dot" x="1827" y="903"/><use href="#dot" x="1942" y="931"/><use href="#dot" x="1791" y="950"/><use href="#dot" x="2143" y="892"/><use href="#dot" x="1742" y="1056"/><use href="#dot" x="2472" y="704"/><use href="#dot" x="2604" y="899"/><use href="#dot" x="2052" y="1"/>
        <circle cx="2826" cy="396" r="6" fill="#fff" stroke="#555" stroke-width="2"/><circle cx="2826" cy="396" r="3" fill="#555"/>
      </g>
      <g class="label state">
        <text x="726" y="62">Oregon</text><text x="911" y="424">Nevada</text><text x="743" y="496">California</text><text x="1354" y="139">Wyoming</text><text x="1705" y="61">South Dakota</text><text x="1715" y="239">Nebraska</text><text x="1161" y="363">Utah</text><text x="1451" y="396">Colorado</text><text x="1799" y="427">Kansas</text><text x="1852" y="620">Oklahoma</text><text x="2215" y="10">Wisconsin</text><text x="2467" y="1">Michigan</text><text x="2048" y="209">Iowa</text><text x="2227" y="347">Illinois</text><text x="2385" y="348">Indiana</text><text x="2552" y="310">Ohio</text><text x="2081" y="438">Missouri</text><text x="2673" y="401">West Virginia</text><text x="2455" y="469">Kentucky</text><text x="2768" y="458">Virginia</text><text x="2378" y="589">Tennessee</text><text x="2745" y="628">North Carolina</text><text x="2793" y="263">Pennsylvania</text><text x="2869" y="154">New York</text><text x="1157" y="684">Arizona</text><text x="982" y="905">Baja California</text><text x="1209" y="956">Sonora</text><text x="1427" y="996">Chihuahua</text><text x="1426" y="685">New Mexico</text><text x="2079" y="652">Arkansas</text><text x="1728" y="851">Texas</text><text x="2216" y="778">Mississippi</text><text x="2121" y="871">Louisiana</text><text x="2358" y="778">Alabama</text><text x="2525" y="773">Georgia</text><text x="2656" y="718">South Carolina</text><text x="2603" y="1048">Florida</text>
      </g>
      <g class="label lake"><text x="2341" y="82">Lake Michigan</text><text x="2572" y="28">Lake Huron</text></g>
      <g class="label country"><text x="3418" y="797">Bermuda</text></g>
      <g class="label city">
        <text x="936" y="84">Boise</text><text x="680" y="407">Sacramento</text><text x="607" y="502">San Jose</text><text x="764" y="553">Fresno</text><text x="987" y="589">Las Vegas</text><text x="1144" y="241">Salt Lake</text><text x="1144" y="271">City</text><text x="1477" y="335">Denver</text><text x="1877" y="268">Lincoln</text><text x="1980" y="375">Kansas City</text><text x="1846" y="461">Wichita</text><text x="1911" y="554">Tulsa</text><text x="1397" y="618">Albuquerque</text><text x="2302" y="123">Milwaukee</text><text x="2315" y="199">Chicago</text><text x="2536" y="170">Detroit</text><text x="2712" y="82">Toronto</text><text x="2689" y="142">Hamilton</text><text x="2198" y="614">Memphis</text><text x="2583" y="627">Charlotte</text><text x="2748" y="577">Raleigh</text><text x="3475" y="14">Halifax</text><text x="3115" y="201">Boston</text><text x="2972" y="307">New York</text><text x="2917" y="356">Philadelphia</text><text x="2826" y="426">Washington</text><text x="2876" y="513">Virginia Beach</text><text x="837" y="713">Los Angeles</text><text x="897" y="766">Tijuana</text><text x="1024" y="776">Mexicali</text><text x="1136" y="747">Phoenix</text><text x="1189" y="783">Tucson</text><text x="1404" y="850">Ciudad Juárez</text><text x="1872" y="753">Dallas</text><text x="1827" y="894">Austin</text><text x="1942" y="922">Houston</text><text x="1790" y="976">San Antonio</text><text x="2143" y="920">Baton Rouge</text><text x="1827" y="1062">Nuevo Laredo</text><text x="2471" y="729">Atlanta</text><text x="2603" y="928">Jacksonville</text>
      </g>

      <g class="pins">
        <use href="#pin" x="2963" y="114"/><use href="#pin" x="2231" y="286"/><use href="#pin" x="783" y="525"/><use href="#pin" x="1724" y="806"/><use href="#pin" x="2598" y="1027"/>
      </g>
    </svg>

    <div class="zoom">
      <button type="button" aria-label="Zoom in">+</button>
      <button type="button" aria-label="Zoom out">−</button>
    </div>
    <div class="credit">
      <svg class="flag" viewBox="0 0 12 8" aria-hidden="true"><path fill="#4c7be1" d="M0 0h12v4H0z"/><path fill="#ffd500" d="M0 4h12v3H0z"/><path fill="#e0bc00" d="M0 7h12v1H0z"/></svg>
      <a href="#leaflet">Leaflet</a>
    </div>
  </section>
</main>
</body>
</html>
```
FILE: styles.css
```css
* { box-sizing: border-box; }

body {
  margin: 0;
  min-height: 100vh;
  display: flex;
  padding: 50px 52px;
  font-family: "Segoe UI", "Open Sans", "Noto Sans", sans-serif;
  color: #1f2937;
  background:
    radial-gradient(circle 1000px at 5% 34%, #b7b2d4 62%, #b7b2d480 67%, #b7b2d400 72%),
    radial-gradient(circle 1000px at 87% -4%, #b7b2d4 49%, #b7b2d480 53%, #b7b2d400 57%),
    radial-gradient(circle 1000px at 104% 81%, #b7b2d4 29%, #b7b2d480 33%, #b7b2d400 38%),
    radial-gradient(ellipse 1000px 2000px at 18.5% 77%, #b7b2d4 34%, #b7b2d480 38%, #b7b2d400 43%),
    #fff;
}

.panel {
  flex: 1;
  min-width: 0;
  padding: 75px 12px 12px;
  border-radius: 84px;
  background: #f5f7fb;
  box-shadow: 0 4px 84px rgba(0, 0, 0, 0.16);
}

.title {
  margin: 0 0 33px;
  font-size: 64px;
  line-height: 90px;
  font-weight: 700;
  color: #3b82f6;
}

.subtitle {
  margin: 0 0 48px;
  font-size: 32px;
  line-height: 44px;
  color: #4b5563;
}

.cards {
  display: grid;
  grid-template-columns: repeat(5, 1fr);
  gap: 43px;
  margin-bottom: 64px;
}

.card {
  padding: 83px 42px 41px;
  border-radius: 34px;
  background: #fff;
  box-shadow: 0 8px 42px rgba(0, 0, 0, 0.1);
}

.card h3 {
  margin: 0 0 21px;
  font-size: 38px;
  line-height: 52px;
  font-weight: 700;
  color: #3b82f6;
}

.card ul {
  margin: 0;
  padding-left: 43px;
  list-style: none;
  font-size: 32px;
  line-height: 44px;
}

.card li::before {
  content: "";
  display: inline-block;
  width: 13px;
  height: 13px;
  margin: 0 26px 0 -39px;
  border-radius: 50%;
  background: currentColor;
  vertical-align: 4px;
}

/* Map */
.map {
  position: relative;
  height: 1059px;
  overflow: hidden;
  border-radius: 34px;
  background: #aad3df;
  box-shadow: 0 8px 42px rgba(0, 0, 0, 0.15);
}

.map-canvas { display: block; width: 100%; height: 100%; }

.map-canvas path { vector-effect: non-scaling-stroke; }

/* Map sections, each with its own grid */
.t4 { transform: matrix(0.70311, 0, 0, 0.4136, -12.6, -18.6); }
.t5 { transform: matrix(0.62039, 0, 0, 0.4136, 1038, -18.6); }
.t6 { transform: matrix(0.62039, 0, 0, 0.4136, 1881, -18.6); }
.t7 { transform: matrix(0.78583, 0, 0, 0.4136, 2724.1, -18.6); }
.t8 { transform: matrix(0.62039, 0, 0, 0.35156, 454.3, 552.1); }
.t9 { transform: matrix(0.62039, 0, 0, 0.35156, 1362.2, 552.1); }
.t10 { transform: matrix(0.62039, 0, 0, 0.35156, 2205.3, 552.1); }
.t11 { transform: matrix(0.50293, 0, 0, 0.54222, 3242.9, 714.2); }

.land { fill: #f2efe9; }
.water { fill: #aad3df; }
.streams { fill: none; stroke: #aad3df; stroke-width: 3; }
.wash { fill: #cbe3bb; opacity: 0.5; }
.wash.faint { fill: #dcebc8; opacity: 0.6; }
.forest { fill: #c0dcb1; }
.hills { fill: #c8dfb9; }
.meadow { fill: #d9efc4; }
.olive { fill: #dadfb0; }
.sand { fill: #f8edcf; }
.lines { fill: none; stroke: #c0dcb1; stroke-width: 7; }
.borders { fill: none; stroke: #cbbfc8; stroke-width: 2; }
.frontier { fill: none; stroke: #c3b0c2; stroke-width: 4; }
.sea-line { fill: none; stroke: #9a93b7; stroke-width: 3; stroke-linejoin: round; }
.sea-line .thin { stroke-width: 1; }

.label {
  font-family: "Noto Sans", sans-serif;
  text-anchor: middle;
  stroke: rgba(255, 255, 255, 0.7);
  stroke-width: 5px;
  stroke-linejoin: round;
  paint-order: stroke;
}
.city { font-size: 23px; fill: #333; }
.state { font-size: 21px; font-style: italic; fill: #86648b; }
.lake { font-size: 21px; font-style: italic; fill: #5a93c9; }
.country { font-size: 27px; fill: #7a5f80; }

.zoom {
  position: absolute;
  top: 22px;
  left: 21px;
  display: flex;
  flex-direction: column;
  border: 4px solid rgba(0, 0, 0, 0.25);
  border-radius: 8px;
  background-clip: padding-box;
}

.zoom button {
  width: 64px;
  height: 64px;
  padding: 0;
  border: 0;
  background: #fff;
  color: #000;
  font: 700 48px/64px "Liberation Mono", monospace;
}

.zoom button:first-child { height: 66px; border-bottom: 2px solid #ccc; border-radius: 4px 4px 0 0; }
.zoom button:last-child { border-radius: 0 0 4px 4px; }

.credit {
  position: absolute;
  right: 0;
  bottom: 0;
  display: flex;
  align-items: center;
  gap: 7px;
  height: 35px;
  padding: 0 10px;
  background: rgba(255, 255, 255, 0.8);
  font-family: "Liberation Sans", Arial, sans-serif;
  font-size: 25px;
}

.credit a { color: #0078a8; text-decoration: none; }
.flag { width: 26px; height: 17px; }
```
